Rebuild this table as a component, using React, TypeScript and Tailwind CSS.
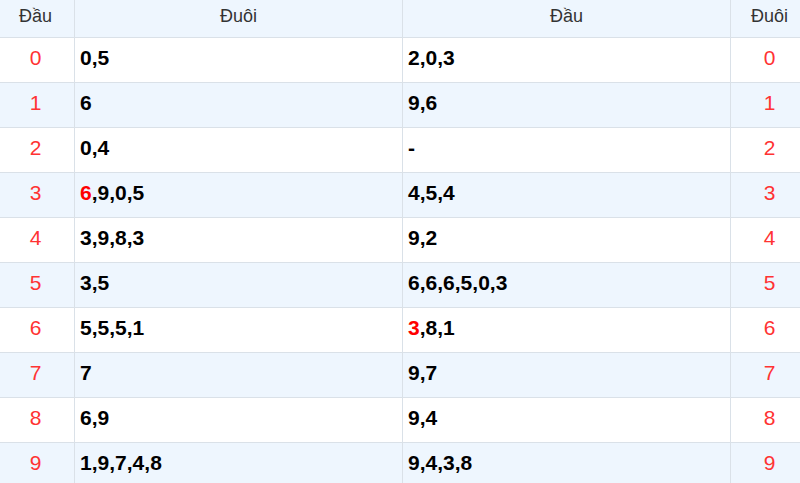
const rows: { d: number; tail: string[]; head: string[]; tailRed?: number; headRed?: number }[] = [
  { d: 0, tail: ["0", "5"], head: ["2", "0", "3"] },
  { d: 1, tail: ["6"], head: ["9", "6"] },
  { d: 2, tail: ["0", "4"], head: ["-"] },
  { d: 3, tail: ["6", "9", "0", "5"], head: ["4", "5", "4"], tailRed: 0 },
  { d: 4, tail: ["3", "9", "8", "3"], head: ["9", "2"] },
  { d: 5, tail: ["3", "5"], head: ["6", "6", "6", "5", "0", "3"] },
  { d: 6, tail: ["5", "5", "5", "1"], head: ["3", "8", "1"], headRed: 0 },
  { d: 7, tail: ["7"], head: ["9", "7"] },
  { d: 8, tail: ["6", "9"], head: ["9", "4"] },
  { d: 9, tail: ["1", "9", "7", "4", "8"], head: ["9", "4", "3", "8"] },
];

function Nums({ items, red }: { items: string[]; red?: number }) {
  return (
    <>
      {items.map((n, i) => (
        <span key={i}>
          {i > 0 && ","}
          <span className={i === red ? "text-[#f00]" : ""}>{n}</span>
        </span>
      ))}
    </>
  );
}

export default function App() {
  return (
    <div className="w-[800px] h-[483px] overflow-hidden bg-white font-['Liberation_Sans',Arial,sans-serif]">
      <table className="w-[812px] -ml-[4px] border-collapse table-fixed">
        <colgroup>
          <col className="w-[78px]" />
          <col className="w-[328px]" />
          <col className="w-[328px]" />
          <col className="w-[78px]" />
        </colgroup>
        <thead>
          <tr className="h-[37px] bg-[#eef6fe] text-[#333] text-[18px]">
            <th className="border border-[#dae1e8] border-t-0 pb-[3px] font-normal">Đầu</th>
            <th className="border border-[#dae1e8] border-t-0 pb-[3px] font-normal">Đuôi</th>
            <th className="border border-[#dae1e8] border-t-0 pb-[3px] font-normal">Đầu</th>
            <th className="border border-[#dae1e8] border-t-0 pb-[3px] font-normal">Đuôi</th>
          </tr>
        </thead>
        <tbody>
          {rows.map((r) => (
            <tr key={r.d} className={`h-[45px] ${r.d % 2 === 1 ? "bg-[#eef6fe]" : "bg-white"}`}>
              <td className="border border-[#dae1e8] pb-[3px] text-center text-[21px] text-[#f33]">{r.d}</td>
              <td className="border border-[#dae1e8] px-[5px] pb-[3px] text-[21px] font-bold text-black">
                <Nums items={r.tail} red={r.tailRed} />
              </td>
              <td className="border border-[#dae1e8] px-[5px] pb-[3px] text-[21px] font-bold text-black">
                <Nums items={r.head} red={r.headRed} />
              </td>
              <td className="border border-[#dae1e8] pb-[3px] text-center text-[21px] text-[#f33]">{r.d}</td>
            </tr>
          ))}
        </tbody>
      </table>
    </div>
  );
}
